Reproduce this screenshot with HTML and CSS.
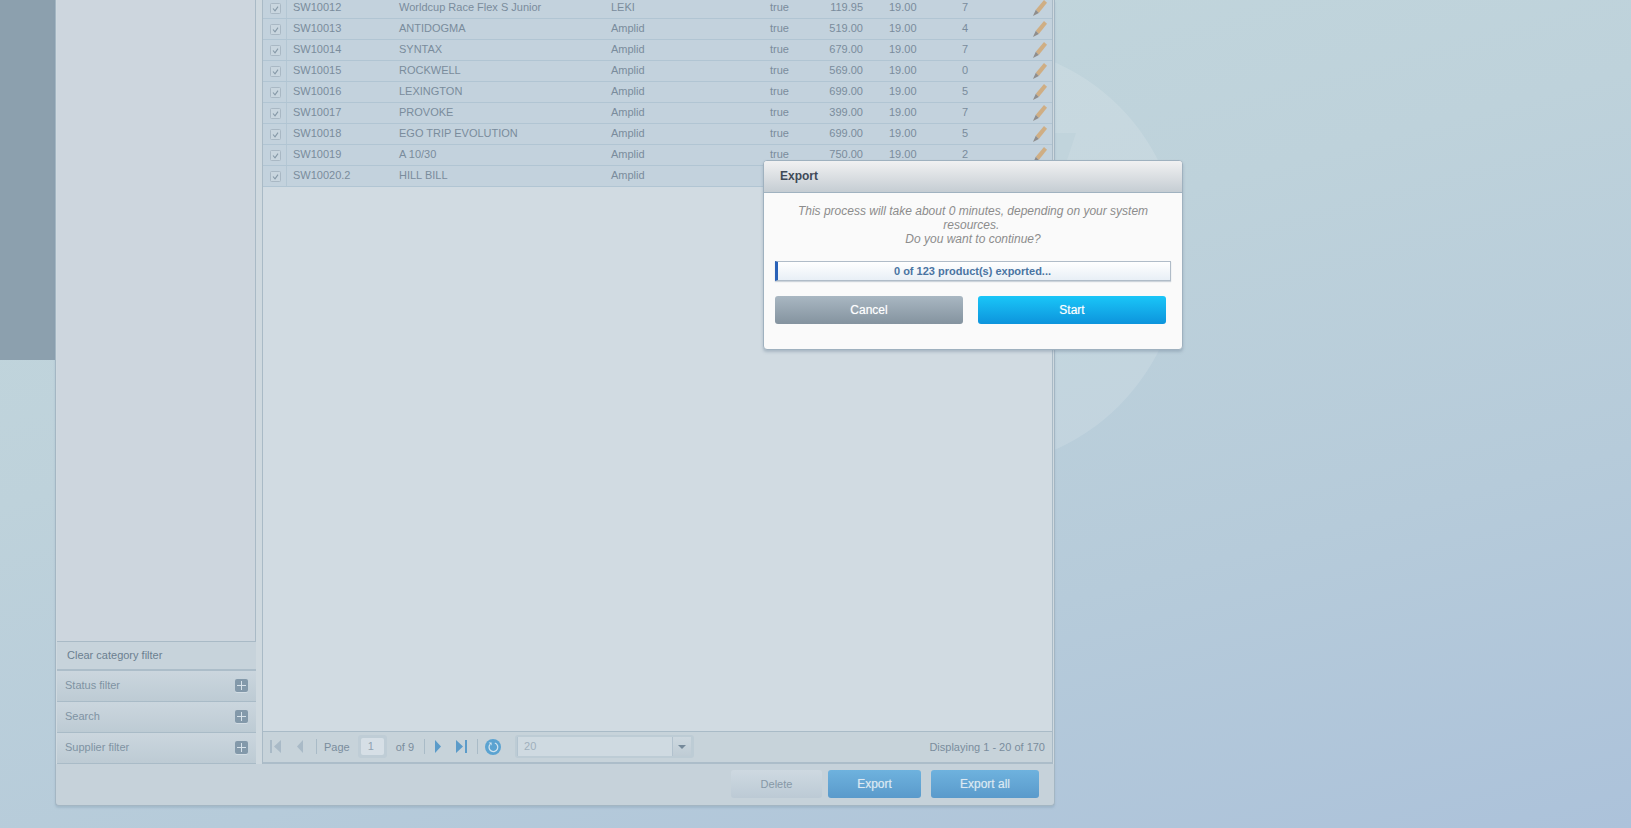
FILE: index.html
```html
<!DOCTYPE html>
<html lang="en">
<head>
<meta charset="utf-8">
<title>Export</title>
<link rel="stylesheet" href="styles.css">
</head>
<body>
<svg class="defs" width="0" height="0" aria-hidden="true">
  <symbol id="pencil" viewBox="0 0 14 16">
    <path d="M2.800 9.800 L11 0 L14 2.800 L5.800 13 Z" fill="#cfae84"/>
    <path d="M2.800 9.800 L5.800 13 L0 16 Z" fill="#8f8d8c"/>
  </symbol>
  <symbol id="check" viewBox="0 0 11 11">
    <rect x=".5" y=".5" width="10" height="10" rx="1" fill="#c9d6df" stroke="#a9b8c4"/>
    <path d="M3 5.500 L5 7.800 L8 3.600" fill="none" stroke="#8598a7" stroke-width="1.100"/>
  </symbol>
</svg>

<svg class="backdrop" width="424" height="424" viewBox="0 0 424 424" aria-hidden="true">
  <circle cx="212" cy="212" r="212" fill="#ffffff" fill-opacity=".13"/>
  <path d="M297 89 H319 L310 116 L280 190 H297 Z" fill="#c1d4dc"/>
</svg>

<div class="shell">
  <div class="strip"></div>
  <div class="window">
    <div class="main">
      <aside class="side">
        <div class="tree"></div>
        <div class="clear">Clear category filter</div>
        <div class="acc">Status filter<span class="plus"></span></div>
        <div class="acc">Search<span class="plus"></span></div>
        <div class="acc">Supplier filter<span class="plus"></span></div>
      </aside>
      <section class="grid">
        <div class="body">
          <div class="rows">
            <div class="row"><span class="c-check"><svg class="chk"><use href="#check"/></svg></span><span class="c-sku">SW10012</span><span class="c-name">Worldcup Race Flex S Junior</span><span class="c-brand">LEKI</span><span class="c-status">true</span><span class="c-price">119.95</span><span class="c-tax">19.00</span><span class="c-stock">7</span><span class="c-act"><svg class="pen"><use href="#pencil"/></svg></span></div>
            <div class="row"><span class="c-check"><svg class="chk"><use href="#check"/></svg></span><span class="c-sku">SW10013</span><span class="c-name">ANTIDOGMA</span><span class="c-brand">Amplid</span><span class="c-status">true</span><span class="c-price">519.00</span><span class="c-tax">19.00</span><span class="c-stock">4</span><span class="c-act"><svg class="pen"><use href="#pencil"/></svg></span></div>
            <div class="row"><span class="c-check"><svg class="chk"><use href="#check"/></svg></span><span class="c-sku">SW10014</span><span class="c-name">SYNTAX</span><span class="c-brand">Amplid</span><span class="c-status">true</span><span class="c-price">679.00</span><span class="c-tax">19.00</span><span class="c-stock">7</span><span class="c-act"><svg class="pen"><use href="#pencil"/></svg></span></div>
            <div class="row"><span class="c-check"><svg class="chk"><use href="#check"/></svg></span><span class="c-sku">SW10015</span><span class="c-name">ROCKWELL</span><span class="c-brand">Amplid</span><span class="c-status">true</span><span class="c-price">569.00</span><span class="c-tax">19.00</span><span class="c-stock">0</span><span class="c-act"><svg class="pen"><use href="#pencil"/></svg></span></div>
            <div class="row"><span class="c-check"><svg class="chk"><use href="#check"/></svg></span><span class="c-sku">SW10016</span><span class="c-name">LEXINGTON</span><span class="c-brand">Amplid</span><span class="c-status">true</span><span class="c-price">699.00</span><span class="c-tax">19.00</span><span class="c-stock">5</span><span class="c-act"><svg class="pen"><use href="#pencil"/></svg></span></div>
            <div class="row"><span class="c-check"><svg class="chk"><use href="#check"/></svg></span><span class="c-sku">SW10017</span><span class="c-name">PROVOKE</span><span class="c-brand">Amplid</span><span class="c-status">true</span><span class="c-price">399.00</span><span class="c-tax">19.00</span><span class="c-stock">7</span><span class="c-act"><svg class="pen"><use href="#pencil"/></svg></span></div>
            <div class="row"><span class="c-check"><svg class="chk"><use href="#check"/></svg></span><span class="c-sku">SW10018</span><span class="c-name">EGO TRIP EVOLUTION</span><span class="c-brand">Amplid</span><span class="c-status">true</span><span class="c-price">699.00</span><span class="c-tax">19.00</span><span class="c-stock">5</span><span class="c-act"><svg class="pen"><use href="#pencil"/></svg></span></div>
            <div class="row"><span class="c-check"><svg class="chk"><use href="#check"/></svg></span><span class="c-sku">SW10019</span><span class="c-name">A 10/30</span><span class="c-brand">Amplid</span><span class="c-status">true</span><span class="c-price">750.00</span><span class="c-tax">19.00</span><span class="c-stock">2</span><span class="c-act"><svg class="pen"><use href="#pencil"/></svg></span></div>
            <div class="row"><span class="c-check"><svg class="chk"><use href="#check"/></svg></span><span class="c-sku">SW10020.2</span><span class="c-name">HILL BILL</span><span class="c-brand">Amplid</span></div>
          </div>
        </div>
        <div class="pager">
          <svg class="ico first" width="11" height="13" viewBox="0 0 11 13"><path d="M0 0h2v13H0z M11 0v13L4 6.500z" fill="#a9bac7"/></svg>
          <svg class="ico prev" width="6" height="13" viewBox="0 0 6 13"><path d="M6 0v13L0 6.500z" fill="#a9bac7"/></svg>
          <span class="sep s1"></span>
          <span class="lbl page">Page</span>
          <span class="pageinput"><span class="pageval">1</span></span>
          <span class="lbl of">of 9</span>
          <span class="sep s2"></span>
          <svg class="ico next" width="6" height="13" viewBox="0 0 6 13"><path d="M0 0v13L6 6.500z" fill="#5b9bc9"/></svg>
          <svg class="ico last" width="11" height="13" viewBox="0 0 11 13"><path d="M0 0v13L7 6.500z M9 0h2v13H9z" fill="#5b9bc9"/></svg>
          <span class="sep s3"></span>
          <svg class="ico refresh" width="16" height="16" viewBox="0 0 16 16"><circle cx="8" cy="8" r="8" fill="#5ba3d1"/><path d="M5 5.400 A4.400 4.400 0 1 0 9.800 4" fill="none" stroke="#cfe2ee" stroke-width="1.300"/><path d="M3.600 3.500 H6.600 V6.500 Z" fill="#cfe2ee"/></svg>
          <span class="combo"><span class="comboval">20</span><span class="trigger"><span class="caret"></span></span></span>
          <span class="lbl disp">Displaying 1 - 20 of 170</span>
        </div>
      </section>
    </div>
    <div class="foot">
      <span class="btn btn-off">Delete</span>
      <span class="btn btn-blue">Export</span>
      <span class="btn btn-blue wide">Export all</span>
    </div>
  </div>
</div>

<div class="modal">
  <div class="m-head">Export</div>
  <div class="m-body">
    <p class="m-text">This process will take about 0 minutes, depending on your system resources.&nbsp;<br>Do you want to continue?</p>
    <div class="progress">0 of 123 product(s) exported...</div>
    <div class="m-btns">
      <span class="mbtn cancel">Cancel</span>
      <span class="mbtn start">Start</span>
    </div>
  </div>
</div>
</body>
</html>
```

FILE: styles.css
```css
* { box-sizing: border-box; }
html, body { margin: 0; height: 100%; }
body {
  position: relative;
  height: 828px;
  overflow: hidden;
  font: 11px/14px "Liberation Sans", Arial, sans-serif;
  color: #76899a;
  background: linear-gradient(165deg, #c4d8dd 0%, #bed2db 40%, #b6cbda 70%, #acc2da 100%);
}
.defs { position: absolute; }
.backdrop { position: absolute; left: 757px; top: 44px; }

.shell { position: relative; display: flex; align-items: flex-start; }
.strip { width: 55px; height: 360px; background: #8ca0ae; }

.window {
  width: 1000px;
  height: 806px;
  display: flex;
  flex-direction: column;
  background: #c6d2da;
  border: 1px solid #a4b6c3;
  border-top: 0;
  border-radius: 0 0 4px 4px;
  box-shadow: 0 2px 2px rgba(130, 155, 175, .35);
}
.main { height: 764px; display: flex; background: #cfd9df; padding-left: 1px; }

.side { width: 199px; display: flex; flex-direction: column; }
.tree { flex: 1; background: #cdd6de; border-right: 1px solid #a9bac6; border-bottom: 1px solid #a9bac6; }
.clear {
  height: 29px;
  padding: 6px 0 0 10px;
  color: #6b7f90;
  background: #c7d3db;
  border-bottom: 2px solid #acbdc9;
}
.acc {
  height: 31px;
  display: flex;
  align-items: center;
  justify-content: space-between;
  padding: 0 8px 2px 8px;
  color: #7f93a3;
  background: linear-gradient(#cbd6de, #bdcbd4);
  border-bottom: 1px solid #a9bbc7;
}
.plus {
  position: relative;
  width: 13px;
  height: 13px;
  background: #8399aa;
  border-radius: 2px;
  box-shadow: 0 1px 0 #d3dde4;
}
.plus::before, .plus::after { content: ""; position: absolute; background: #d7e2ea; }
.plus::before { left: 2px; right: 2px; top: 6px; height: 1px; }
.plus::after { top: 2px; bottom: 2px; left: 6px; width: 1px; }

.grid {
  margin-left: 6px;
  width: 791px;
  display: flex;
  flex-direction: column;
  border-left: 1px solid #a9bac6;
  border-right: 1px solid #a9bac6;
}
.body { flex: 1; background: #d1dbe2; overflow: hidden; }
.rows { margin-top: -2px; }
.row {
  height: 21px;
  display: grid;
  grid-template-columns: 24px 112px 212px 159px 50px 43px 88px 70px 31px;
  align-items: center;
  background: #c3d2dd;
  border-bottom: 1px solid #b1c5d3;
  color: #7a8c9c;
  white-space: nowrap;
}
.row > span { display: block; height: 20px; line-height: 18px; }
.c-check { border-right: 1px solid #b4c7d4; padding: 5px 0 0 7px; }
.chk { display: block; width: 11px; height: 11px; }
.c-sku { padding-left: 6px; }
.c-price { text-align: right; }
.c-tax { padding-left: 26px; }
.c-stock { padding-left: 11px; }
.c-act { padding: 2px 0 0 12px; }
.pen { display: block; width: 14px; height: 16px; }

.pager {
  height: 33px;
  display: flex;
  align-items: center;
  padding: 0 0 1px 7px;
  background: #c7d3da;
  border-top: 1px solid #a9bbc7;
  border-bottom: 2px solid #acbdc9;
  flex: none;
}
.ico { flex: none; display: block; }
.prev { margin-left: 16px; }
.sep { width: 1px; height: 15px; background: #a9bbc7; flex: none; }
.s1 { margin-left: 13px; }
.s2 { margin-left: 10px; }
.s3 { margin-left: 10px; }
.lbl { color: #7a8d9d; white-space: nowrap; }
.page { margin-left: 7px; font-size: 11px; }
.pageinput {
  margin-left: 8px;
  width: 29px;
  height: 23px;
  padding: 3px;
  background: #bfcdd6;
  border-radius: 3px;
}
.pageval {
  display: block;
  height: 17px;
  padding-left: 7px;
  line-height: 17px;
  color: #8fa2b1;
  background: #d6dfe6;
  border-radius: 2px;
}
.of { margin-left: 9px; }
.next { margin-left: 10px; }
.last { margin-left: 15px; }
.refresh { margin-left: 7px; }
.combo {
  margin-left: 14px;
  width: 179px;
  height: 23px;
  display: flex;
  padding: 2px 3px 2px 2px;
  background: #bdccd5;
  border-radius: 3px;
}
.comboval {
  flex: 1;
  padding-left: 6px;
  line-height: 18px;
  color: #9fb0bd;
  background: #cfdae1;
  border-left: 1px solid #b3c4d0;
}
.trigger {
  position: relative;
  width: 19px;
  background: linear-gradient(#cdd8df, #bfccd5);
  border-left: 1px solid #b2c2ce;
}
.caret {
  position: absolute;
  left: 5px;
  top: 8px;
  border: 4px solid transparent;
  border-top: 4px solid #75899a;
  border-bottom: 0;
}
.disp { margin-left: auto; padding-right: 7px; }

.foot {
  flex: 1;
  display: flex;
  justify-content: flex-end;
  padding: 6px 15px 0 0;
}
.btn {
  width: 93px;
  height: 28px;
  margin-left: 10px;
  text-align: center;
  font-size: 12px;
  line-height: 29px;
  border-radius: 3px;
}
.btn-off {
  width: 91px;
  margin-left: 0;
  font-size: 11px;
  color: #8698a7;
  background: linear-gradient(#ced9e1, #bccad5);
}
.btn-off + .btn { margin-left: 6px; }
.btn-blue {
  color: #dce9f2;
  text-shadow: 0 0 1px rgba(220, 233, 242, .5);
  background: linear-gradient(#6eb2de, #5a9acb);
}
.wide { width: 108px; }

.modal {
  position: absolute;
  left: 763px;
  top: 160px;
  width: 420px;
  height: 190px;
  background: #fafafa;
  border: 1px solid #9fb1bf;
  border-radius: 4px;
  box-shadow: 0 2px 3px rgba(120, 140, 160, .45);
  overflow: hidden;
}
.m-head {
  height: 32px;
  padding-left: 16px;
  font-size: 12px;
  font-weight: 700;
  line-height: 30px;
  color: #3f4a57;
  background: linear-gradient(#f1f1f2, #c5cdd3);
  border-bottom: 1px solid #a0b2c0;
}
.m-body { padding: 11px 11px 0; }
.m-text {
  margin: 0;
  padding: 0 12px;
  font-size: 12px;
  font-style: italic;
  line-height: 14px;
  text-align: center;
  color: #8c8c8c;
}
.progress {
  height: 20px;
  margin-top: 15px;
  width: 396px;
  padding-right: 3px;
  text-align: center;
  font-weight: 700;
  line-height: 18px;
  color: #4a74a2;
  background: linear-gradient(#ffffff, #e8eff6);
  border: 1px solid #b0bcc8;
  border-left: 3px solid #2a62b8;
  box-shadow: 0 1px 1px rgba(120, 140, 160, .35);
}
.m-btns { display: flex; gap: 15px; margin-top: 15px; }
.mbtn {
  width: 188px;
  height: 28px;
  text-align: center;
  font-size: 12px;
  line-height: 29px;
  color: #fff;
  text-shadow: 0 0 1px rgba(255, 255, 255, .55);
  border-radius: 3px;
}
.cancel { background: linear-gradient(#a9b7c2, #84939f); }
.start { background: linear-gradient(#1ac6f8, #0d94dc); }
```
